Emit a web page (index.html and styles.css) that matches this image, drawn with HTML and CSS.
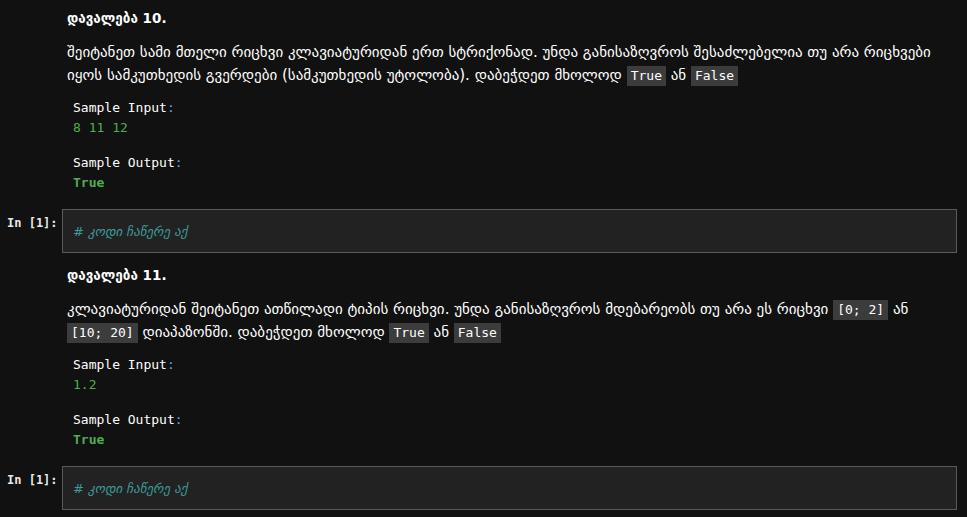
FILE: index.html
```html
<!DOCTYPE html>
<html lang="ka">
<head>
<meta charset="utf-8">
<link rel="stylesheet" href="styles.css">
</head>
<body>
<div class="notebook">
  <div class="cell md">
    <div class="prompt"></div>
    <div class="content">
      <h4 class="title">დავალება 10.</h4>
      <p class="text">შეიტანეთ სამი მთელი რიცხვი კლავიატურიდან ერთ სტრიქონად. უნდა განისაზღვროს შესაძლებელია თუ არა რიცხვები იყოს სამკუთხედის გვერდები (სამკუთხედის უტოლობა). დაბეჭდეთ მხოლოდ <code class="chip">True</code> ან <code class="chip">False</code></p>
      <pre class="sample"><span class="lbl">Sample Input</span><span class="colon">:</span>
<span class="val">8 11 12</span></pre>
      <pre class="sample"><span class="lbl">Sample Output</span><span class="colon">:</span>
<span class="val bold">True</span></pre>
    </div>
  </div>
  <div class="cell code">
    <div class="prompt">In [1]:</div>
    <div class="input"><span class="comment"># კოდი ჩაწერე აქ</span></div>
  </div>
  <div class="cell md">
    <div class="prompt"></div>
    <div class="content">
      <h4 class="title">დავალება 11.</h4>
      <p class="text">კლავიატურიდან შეიტანეთ ათწილადი ტიპის რიცხვი. უნდა განისაზღვროს მდებარეობს თუ არა ეს რიცხვი <code class="chip">[0; 2]</code> ან <code class="chip">[10; 20]</code> დიაპაზონში. დაბეჭდეთ მხოლოდ <code class="chip">True</code> ან <code class="chip">False</code></p>
      <pre class="sample"><span class="lbl">Sample Input</span><span class="colon">:</span>
<span class="val">1.2</span></pre>
      <pre class="sample"><span class="lbl">Sample Output</span><span class="colon">:</span>
<span class="val bold">True</span></pre>
    </div>
  </div>
  <div class="cell code">
    <div class="prompt">In [1]:</div>
    <div class="input"><span class="comment"># კოდი ჩაწერე აქ</span></div>
  </div>
</div>
</body>
</html>
```
FILE: styles.css
```css
html, body {
  margin: 0;
  padding: 0;
  background: #111111;
}
.notebook {
  padding: 0 10px 0 0;
  font-family: "DejaVu Sans", "Noto Sans", sans-serif;
  color: #ffffff;
}
.cell {
  display: flex;
  flex-direction: row;
}
.prompt {
  width: 62px;
  flex: none;
  box-sizing: border-box;
  padding: 8px 0 0 7px;
  font-family: "DejaVu Sans Mono", monospace;
  font-size: 12px;
  font-weight: bold;
  color: #e8e8e8;
}
.content {
  flex: 1;
  padding: 9px 5px 6px 5px;
}
.title {
  margin: 0 0 14px 0;
  font-size: 13.5px;
  font-weight: bold;
  line-height: 18px;
}
.text {
  margin: 0 0 11px 0;
  font-size: 15px;
  line-height: 23px;
}
.chip {
  display: inline-block;
  white-space: nowrap;
  font-family: "DejaVu Sans Mono", monospace;
  font-size: 13px;
  line-height: 18px;
  background: #3c3c3c;
  color: #ffffff;
  padding: 1px 4px;
}
.sample {
  margin: 0 0 15px 6px;
  font-family: "DejaVu Sans Mono", monospace;
  font-size: 13px;
  line-height: 20px;
}
.sample:last-child {
  margin-bottom: 4px;
}
.lbl {
  color: #ffffff;
}
.colon {
  color: #5aa9e6;
}
.val {
  color: #4caf50;
}
.val.bold {
  font-weight: bold;
}
.code .prompt {
  padding-top: 7px;
}
.code {
  padding: 6px 0 4px 0;
}
.input {
  flex: 1;
  height: 44px;
  box-sizing: border-box;
  border: 1px solid #5a5a5a;
  background: #222222;
  padding: 13px 10px 0 10px;
  font-family: "DejaVu Sans", sans-serif;
  font-size: 13px;
  line-height: 18px;
}
.comment {
  font-style: italic;
  color: #3b9c9c;
}
```
